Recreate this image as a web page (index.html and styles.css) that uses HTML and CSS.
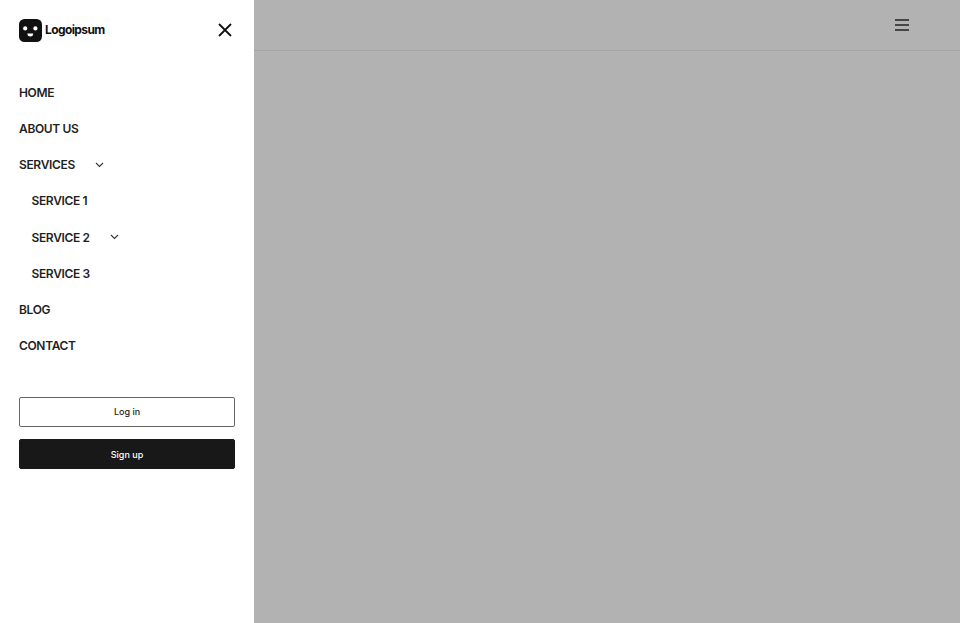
FILE: index.html
```html
<!DOCTYPE html>
<html>
<head>
	<meta charset="utf-8">
	<meta name="viewport" content="width=device-width, initial-scale=1">
	<title>Logoipsum</title>
	<link rel="stylesheet" href="styles.css">
</head>
<body>
<div class="page">
	<aside class="sidebar">
		<div class="sideTop">
			<div class="logo">
				<svg class="logoMark" width="23" height="23" viewBox="0 0 23 23">
					<rect width="23" height="23" rx="5.5" fill="#111"/>
					<circle cx="6.2" cy="9.4" r="2.1" fill="#fff"/>
					<circle cx="16.4" cy="9.4" r="2.1" fill="#fff"/>
					<path d="M8.4 14.5h5.8a2.9 2.9 0 0 1-5.8 0z" fill="#fff"/>
				</svg>
				<span class="logoText">Logoipsum</span>
			</div>
			<svg class="closeIcon" width="14" height="14" viewBox="0 0 14 14">
				<path d="M1 1l12 12M13 1L1 13" stroke="#111" stroke-width="1.8" fill="none"/>
			</svg>
		</div>
		<ul class="menu">
			<li><a>HOME</a></li>
			<li><a>ABOUT US</a></li>
			<li>
				<a>SERVICES
					<svg class="chev" width="9" height="6" viewBox="0 0 9 6"><path d="M1 1l3.5 3.5L8 1" stroke="#333" stroke-width="1.1" fill="none"/></svg>
				</a>
				<ul class="subMenu">
					<li><a>SERVICE 1</a></li>
					<li><a>SERVICE 2
						<svg class="chev" width="9" height="6" viewBox="0 0 9 6"><path d="M1 1l3.5 3.5L8 1" stroke="#333" stroke-width="1.1" fill="none"/></svg>
					</a></li>
					<li><a>SERVICE 3</a></li>
				</ul>
			</li>
			<li><a>BLOG</a></li>
			<li><a>CONTACT</a></li>
		</ul>
		<div class="actions">
			<button class="btn btnOutline">Log in</button>
			<button class="btn btnDark">Sign up</button>
		</div>
	</aside>
	<main class="content">
		<header class="topBar">
			<svg class="burger" width="14" height="12" viewBox="0 0 14 12">
				<path d="M0 1h14M0 6h14M0 11h14" stroke="#222" stroke-width="1.5" fill="none"/>
			</svg>
		</header>
	</main>
</div>
</body>
</html>
```

FILE: styles.css
```css
*{
	padding: 0px;
	margin: 0px;
	box-sizing: border-box;
}
html,body{
	height: 100%;
}
body{
	font-family: Inter, "Liberation Sans", sans-serif;
	color: #1a1a1a;
	background-color: #b2b2b2;
}
.page{
	display: flex;
	height: 623px;
	overflow: hidden;
}
.sidebar{
	width: 254px;
	background-color: #fff;
	padding: 0 19px;
	flex-shrink: 0;
}
.sideTop{
	height: 60px;
	display: flex;
	align-items: center;
	justify-content: space-between;
	padding-right: 3px;
}
.logo{
	display: flex;
	align-items: center;
	gap: 3px;
}
.logoMark{
	display: block;
}
.logoText{
	font-size: 12px;
	font-weight: 700;
	letter-spacing: -0.6px;
	padding-bottom: 1px;
	color: #111;
}
.menu{
	list-style: none;
	padding-top: 14.5px;
}
.menu a{
	display: flex;
	align-items: center;
	height: 36.13px;
	font-size: 12px;
	font-weight: 600;
	letter-spacing: -0.35px;
	color: #1f1f1f;
}
.chev{
	margin-left: 20.5px;
}
.subMenu{
	list-style: none;
	padding-left: 12.5px;
}
.actions{
	display: flex;
	flex-direction: column;
	gap: 12px;
	padding-top: 33.5px;
}
.btn{
	height: 30px;
	width: 216px;
	border-radius: 2px;
	font-family: inherit;
	font-size: 9px;
	font-weight: 500;
}
.btnOutline{
	background-color: #fff;
	border: 1px solid #666;
	color: #1a1a1a;
	padding-bottom: 1px;
}
.btnDark{
	background-color: #181818;
	border: 1px solid #181818;
	color: #fff;
}
.content{
	flex: 1;
}
.topBar{
	height: 51px;
	border-bottom: 1px solid #a5a5a5;
	display: flex;
	align-items: center;
	justify-content: flex-end;
	padding-right: 51px;
}
.burger{
	display: block;
}
```
